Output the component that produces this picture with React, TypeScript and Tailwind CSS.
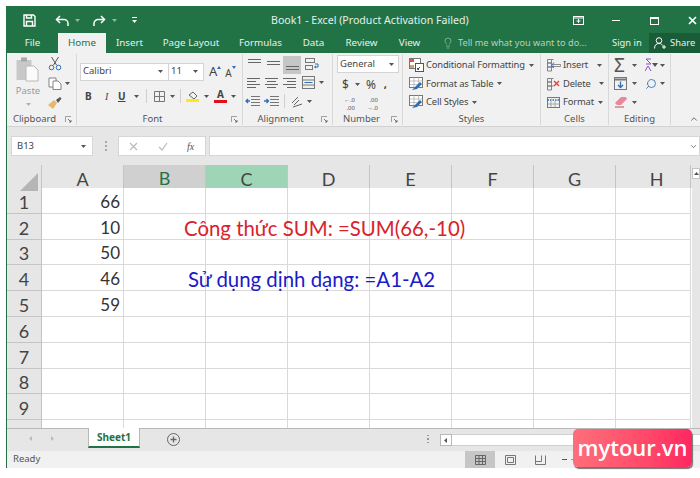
import React from "react";
import { Search, Lightbulb, ChevronUp, ChevronDown } from "lucide-react";

const ui = { fontFamily: '"Noto Sans", sans-serif' };
const cellFont = { fontFamily: 'Lato, "Noto Sans", sans-serif' };

const Caret = ({ className = "" }: { className?: string }) => (
	<svg width="5" height="3" viewBox="0 0 5 3" className={`shrink-0 ${className}`}>
		<path d="M0 0h5L2.5 3z" fill="#555" />
	</svg>
);

const Launcher = () => (
	<svg width="7" height="7" viewBox="0 0 7 7" className="absolute right-[4px] top-[3px]" fill="none" stroke="#8a8a8a" strokeWidth="0.8">
		<path d="M.5 6V.5H6" />
		<path d="M3 3l3 3M6 4v2H4" stroke="#555" />
	</svg>
);

const Lines = ({ rows, selected }: { rows: [number, number][]; selected?: boolean }) => (
	<div className={`w-[18px] h-[18px] flex flex-col justify-center items-center gap-[2px] ${selected ? "bg-[#c6c6c6]" : ""}`}>
		<svg width="13" height="12" viewBox="0 0 13 12" stroke="#666" strokeWidth="1">
			{rows.map(([x, w], i) => (
				<path key={i} d={`M${x} ${i * 3 + 1.5}h${w}`} />
			))}
		</svg>
	</div>
);

const Group = ({ label, width, launcher, labelPad = 0, children }: { label: string; width: number; launcher?: boolean; labelPad?: number; children: React.ReactNode }) => (
	<div className="flex flex-col shrink-0 border-r border-[#d8d8d8] mb-[1px]" style={{ width }}>
		<div className="h-[60px] relative flex">{children}</div>
		<div className="h-[12px] relative flex items-center justify-center text-[9.5px] text-[#555]" style={{ paddingRight: labelPad }}>
			{label}
			{launcher && <Launcher />}
		</div>
	</div>
);

const StyleIcon = () => (
	<svg width="15" height="14" viewBox="0 0 15 14" className="shrink-0">
		<rect x="0.5" y="0.5" width="13" height="10" fill="#fff" stroke="#777" />
		<path d="M.5 4h13M.5 7.5h13M5 .5v10M9.5 .5v10" stroke="#aaa" strokeWidth="0.7" />
		<path d="M3 13l5-5 3-3 2 2-5 5z" fill="#2f6fb5" />
	</svg>
);

const CondIcon = () => (
	<svg width="15" height="14" viewBox="0 0 15 14" className="shrink-0">
		<rect x="0.5" y="0.5" width="11" height="10" fill="#fff" stroke="#777" />
		<rect x="1" y="1" width="4" height="3" fill="#d9583f" />
		<rect x="1" y="7" width="4" height="3" fill="#e79a55" />
		<rect x="6.5" y="5.5" width="8" height="8" fill="#fff" stroke="#555" />
		<path d="M9 11l2-2M10 11.500h-1.500V10" stroke="#444" fill="none" />
	</svg>
);

const CellIcon = ({ mark }: { mark: "insert" | "delete" | "format" }) => (
	<svg width="15" height="14" viewBox="0 0 15 14" className="shrink-0" fill="none">
		{mark === "format" ? (
			<>
				<rect x="1.5" y="2.5" width="12" height="10" stroke="#777" />
				<path d="M1.5 5h12" stroke="#2f6fb5" strokeWidth="1.6" strokeDasharray="1.5 1" />
				<path d="M5 6v6M9 6v6M1.5 9h12" stroke="#999" strokeWidth="0.8" />
			</>
		) : (
			<>
				<path d="M1.5 1.5h4v3.5h-4zM1.5 5h4v4h-4zM1.5 9h4v4h-4zM5.5 1.5h2M5.5 9h2" stroke="#777" strokeWidth="0.9" />
				{mark === "insert" ? (
					<>
						<path d="M7 6.5h7.5v2H7z" stroke="#777" strokeWidth="0.8" />
						<path d="M8 4.5l-2.5 3L8 10" stroke="#2f6fb5" />
					</>
				) : (
					<path d="M8 4l5 5M13 4l-5 5" stroke="#d9473a" strokeWidth="1.4" />
				)}
			</>
		)}
	</svg>
);

const StyleRow = ({ text, icon }: { text: string; icon?: React.ReactNode }) => (
	<div className="h-[18.5px] flex items-center gap-[2px] text-[9.4px] tracking-[-0.15px] text-[#444] whitespace-nowrap">
		{icon ?? <StyleIcon />}
		<span>{text}</span>
		<Caret className="ml-[2px]" />
	</div>
);

const CellRow = ({ text, mark, caretClass }: { text: string; mark: "insert" | "delete" | "format"; caretClass: string }) => (
	<div className="h-[18.5px] flex items-center gap-[2px] text-[9.4px] tracking-[-0.15px] text-[#444] whitespace-nowrap">
		<CellIcon mark={mark} />
		<span>{text}</span>
		<Caret className={caretClass} />
	</div>
);

const TitleBar = () => (
	<div className="h-[27px] bg-[#217346] flex items-center text-white shrink-0">
		<div className="w-[264px] flex items-center pl-[16px] pt-[2px]">
			<svg width="13" height="13" viewBox="0 0 13 13" fill="none" stroke="#fff" strokeWidth="1.4">
				<path d="M1 1h9.5L12 2.5V12H1z" />
				<path d="M3.5 1v3h5V1M3.5 12V7.5h6V12" />
			</svg>
			<svg width="16" height="12" viewBox="0 0 16 12" fill="none" stroke="#fff" strokeWidth="1.5" className="ml-[19px]">
				<path d="M5 1L1.5 4.5 5 8" />
				<path d="M2 4.5h7a4 4 0 0 1 4 4V11" />
			</svg>
			<Caret className="ml-[4px] invert" />
			<svg width="15" height="12" viewBox="0 0 15 12" fill="none" stroke="#fff" strokeWidth="1.5" className="ml-[11px]">
				<path d="M10 1l3.5 3.5L10 8" />
				<path d="M13 4.5H7a4 4 0 0 0-4 4V11" />
			</svg>
			<Caret className="ml-[6px] invert" />
			<svg width="5" height="7" viewBox="0 0 5 7" className="ml-[15px]" fill="#fff">
				<path d="M0 0h5v1H0zM0 3h5L2.5 6z" />
			</svg>
		</div>
		<div className="text-[10.6px] whitespace-nowrap w-[292px] text-[#e6f0ea] pt-[3px]" style={ui}>
			Book1 - Excel (Product Activation Failed)
		</div>
		<div className="flex items-center pt-[2px]">
			<svg width="11" height="9" viewBox="0 0 11 9" fill="none" stroke="#fff" className="ml-[10px]">
				<rect x="0.5" y="0.5" width="10" height="8" />
				<path d="M.5 2h10" />
				<path d="M5.5 3v4M3.5 5h4" />
			</svg>
			<div className="w-[8px] h-[1.5px] bg-white ml-[28px]" />
			<div className="w-[9px] h-[8px] border border-white border-t-2 ml-[30px]" />
			<svg width="9" height="9" viewBox="0 0 9 9" stroke="#fff" strokeWidth="1.7" className="ml-[29px]">
				<path d="M1 1l7 7M8 1L1 8" />
			</svg>
		</div>
	</div>
);

const tabs: [string, number][] = [
	["Insert", 47],
	["Page Layout", 76],
	["Formulas", 63],
	["Data", 43],
	["Review", 53],
	["View", 43],
];

const TabBar = () => (
	<div className="h-[20px] bg-[#217346] flex items-stretch text-[9.8px] text-[#e8f1ec] shrink-0" style={ui}>
		<div className="w-[51px] flex items-center justify-center">File</div>
		<div className="w-[48px] bg-[#f1f1f1] text-[#217346] flex items-center justify-center">Home</div>
		{tabs.map(([t, w]) => (
			<div key={t} className="flex items-center justify-center shrink-0" style={{ width: w }}>
				{t}
			</div>
		))}
		<div className="flex items-center w-[181px] pl-[11px] gap-[4px] text-[9.2px] text-[#b6d0c1] whitespace-nowrap">
			<Lightbulb size={12} strokeWidth={1.2} />
			<span>Tell me what you want to do...</span>
		</div>
		<div className="w-[37px] flex items-center whitespace-nowrap text-[9.4px]">Sign in</div>
		<div className="flex-1 bg-[#1a5c38] flex items-center gap-[3px] pl-[5px] whitespace-nowrap text-[9.4px]">
			<svg width="13" height="12" viewBox="0 0 13 12" fill="none" stroke="#fff">
				<circle cx="5" cy="3.5" r="2.8" />
				<path d="M.5 11.500c0-3.500 2-5 4.500-5s3 1 3.500 2M10 8v4M8 10h4" />
			</svg>
			Share
		</div>
	</div>
);

const Ribbon = () => (
	<div className="h-[74px] bg-[#f1f1f1] border-b border-[#d2d2d2] flex shrink-0 relative pt-[1px]" style={ui}>
		<Group label="Clipboard" width={70} launcher labelPad={14}>
			<div className="w-[38px] flex flex-col items-center pl-[4px] pt-[3px]">
				<svg width="24" height="25" viewBox="0 0 24 25">
					<rect x="0.500" y="3" width="15" height="20" fill="#c9c9c9" />
					<rect x="5" y="0.500" width="6" height="4" fill="#a9a9a9" />
					<path d="M10 9h8l4 4v11H10z" fill="#fbfbfb" stroke="#b8b8b8" />
				</svg>
				<span className="text-[9.5px] text-[#9a9a9a] leading-[12px] mt-[3px]">Paste</span>
				<Caret className="mt-[6px] opacity-40" />
			</div>
			<div className="flex flex-col pl-[3px] pt-[2px] gap-[6px]">
				<svg width="14" height="15" viewBox="0 0 14 15" fill="none" stroke="#555">
					<path d="M3.500 1L8.500 9M10.500 1L5.500 9" />
					<circle cx="3.500" cy="11.500" r="2.300" stroke="#2f6fb5" />
					<circle cx="10.500" cy="11.500" r="2.300" stroke="#2f6fb5" />
				</svg>
				<div className="flex items-center gap-[3px]">
					<svg width="14" height="13" viewBox="0 0 14 13" fill="#fff" stroke="#777" strokeWidth="0.9">
						<path d="M1 1h7v9H1z" />
						<path d="M5 4h5l3 3v5.500H5z" />
					</svg>
					<Caret />
				</div>
				<svg width="14" height="13" viewBox="0 0 14 13">
					<path d="M0 9l6-5 3 3-4 6z" fill="#e8b76a" />
					<path d="M8 4l4-3 1.500 1.500L10 7z" fill="#555" />
				</svg>
			</div>
		</Group>

		<Group label="Font" width={166} launcher labelPad={14}>
			<div className="flex flex-col pl-[3px] pt-[8px]">
				<div className="flex items-center h-[19px]">
					<div className="w-[89px] h-[18px] bg-white border border-[#d4d4d4] flex items-center justify-between pl-[2px] pr-[5px] text-[9.5px] text-[#444]">
						Calibri <Caret />
					</div>
					<div className="w-[35px] h-[18px] bg-white border border-l-0 border-[#d4d4d4] flex items-center justify-between pl-[2px] pr-[5px] text-[9.5px] text-[#444]">
						11 <Caret />
					</div>
					<span className="ml-[5px] text-[13px] text-[#444] leading-none">A</span>
					<svg width="4" height="3" viewBox="0 0 4 3" className="mb-[9px]"><path d="M0 3l2-3 2 3z" fill="#2f6fb5" /></svg>
					<span className="ml-[4px] text-[10px] text-[#444] leading-none mt-[2px]">A</span>
					<svg width="4" height="3" viewBox="0 0 4 3" className="mb-[9px]"><path d="M0 0l2 3 2-3z" fill="#2f6fb5" /></svg>
				</div>
				<div className="flex items-center h-[18px] mt-[6px] text-[#444]">
					<span className="w-[10px] ml-[5px] font-bold text-[10px]">B</span>
					<span className="w-[10px] ml-[10px] italic text-[10px]" style={{ fontFamily: '"Liberation Serif", serif' }}>I</span>
					<span className="w-[9px] ml-[3px] font-bold underline text-[10px]">U</span>
					<Caret className="ml-[7px]" />
					<div className="w-px h-[14px] bg-[#cfcfcf] ml-[7px]" />
					<svg width="11" height="11" viewBox="0 0 11 11" fill="none" stroke="#777" className="ml-[7px]">
						<path d="M.5.500h10v10H.500zM.5 5.500h10M5.500.500v10" />
					</svg>
					<Caret className="ml-[5px]" />
					<div className="w-px h-[14px] bg-[#cfcfcf] ml-[5px]" />
					<div className="flex flex-col items-center ml-[5px]">
						<svg width="12" height="8" viewBox="0 0 12 8" fill="none" stroke="#666"><path d="M2 4l4-3 4 4-3 3z" /></svg>
						<div className="w-[13px] h-[3px] bg-[#ffe81a]" />
					</div>
					<Caret className="ml-[5px]" />
					<div className="flex flex-col items-center ml-[5px]">
						<span className="text-[10px] font-bold leading-[9px]">A</span>
						<div className="w-[13px] h-[3px] bg-[#e0101a] mt-[1px]" />
					</div>
					<Caret className="ml-[4px]" />
				</div>
			</div>
		</Group>

		<Group label="Alignment" width={90} launcher labelPad={14}>
			<div className="flex flex-col pl-[1px] pt-[1px]">
				<div className="flex items-center h-[18px]">
					<div className="w-[16px] ml-[1px]"><Lines rows={[[0, 13], [0, 13], [0, 0], [0, 0]]} /></div>
					<div className="w-[18px] ml-[3px] pt-[4px]"><Lines rows={[[0, 13], [0, 13], [0, 0], [0, 0]]} /></div>
					<div className="ml-[1px] pt-[1px]"><Lines rows={[[0, 0], [0, 0], [0, 13], [0, 13]]} selected /></div>
					<svg width="14" height="13" viewBox="0 0 14 13" fill="none" stroke="#777" className="ml-[4px]">
						<rect x="0.500" y="0.500" width="9" height="4" />
						<rect x="0.500" y="7.500" width="7" height="4" />
						<path d="M10 6h3v3H10M11 8L9.500 9l1.500 1" stroke="#2f6fb5" />
					</svg>
				</div>
				<div className="flex items-center h-[19px]">
					<Lines rows={[[0, 13], [0, 9], [0, 13], [0, 9]]} />
					<Lines rows={[[0, 13], [2, 9], [0, 13], [2, 9]]} />
					<Lines rows={[[0, 13], [4, 9], [0, 13], [4, 9]]} />
					<svg width="13" height="13" viewBox="0 0 13 13" fill="none" stroke="#777" className="ml-[4px]">
						<rect x="0.500" y="0.500" width="12" height="12" />
						<path d="M.5 4h12M.5 9h12" />
						<path d="M2.500 6.500h8" stroke="#2f6fb5" />
					</svg>
					<Caret className="ml-[4px]" />
				</div>
				<div className="flex items-center h-[18px] pl-[1px]">
					<svg width="15" height="12" viewBox="0 0 15 12" fill="none" stroke="#777">
						<path d="M6 1.500h9M6 4.500h9M6 7.500h9M6 10.500h9" />
						<path d="M5 6H1M3 4L1 6l2 2" stroke="#2f6fb5" strokeWidth="1.300" />
					</svg>
					<svg width="15" height="12" viewBox="0 0 15 12" fill="none" stroke="#777" className="ml-[4px]">
						<path d="M6 1.500h9M6 4.500h9M6 7.500h9M6 10.500h9" />
						<path d="M0 6h4M2.500 4l2 2-2 2" stroke="#2f6fb5" strokeWidth="1.300" />
					</svg>
					<div className="w-px h-[14px] bg-[#cfcfcf] ml-[5px]" />
					<svg width="13" height="13" viewBox="0 0 13 13" fill="none" stroke="#666" className="ml-[6px]">
						<path d="M1 8l6-6M3 10l5-5M2 12l9-3" />
					</svg>
					<Caret className="ml-[3px]" />
				</div>
			</div>
		</Group>

		<Group label="Number" width={70} launcher labelPad={12}>
			<div className="flex flex-col pl-[4px] pt-[1px]">
				<div className="w-[62px] h-[18px] bg-white border border-[#d4d4d4] flex items-center justify-between pl-[2px] pr-[4px] text-[9.5px] text-[#444]">
					General <Caret />
				</div>
				<div className="flex items-center h-[19px] mt-[2px] text-[#444]">
					<span className="ml-[5px] text-[12px]">$</span>
					<Caret className="ml-[6px]" />
					<span className="ml-[6px] text-[12px]">%</span>
					<span className="ml-[8px] text-[11px] font-bold leading-none mb-[3px]">,</span>
				</div>
				<div className="flex items-center h-[18px] mt-[1px] text-[6px] leading-[8px] text-[#555]">
					<span className="ml-[4px] w-[14px] text-right">←.0<br />.00</span>
					<span className="ml-[9px] w-[14px] text-right">.00<br />→.0</span>
				</div>
			</div>
		</Group>

		<Group label="Styles" width={138}>
			<div className="flex flex-col pl-[6px] pt-[2px]">
				<StyleRow text="Conditional Formatting" icon={<CondIcon />} />
				<StyleRow text="Format as Table" />
				<StyleRow text="Cell Styles" />
			</div>
		</Group>

		<Group label="Cells" width={68}>
			<div className="flex flex-col pl-[5px] pt-[2px]">
				<CellRow text="Insert" mark="insert" caretClass="ml-[7px]" />
				<CellRow text="Delete" mark="delete" caretClass="ml-[6px]" />
				<CellRow text="Format" mark="format" caretClass="ml-[2px]" />
			</div>
		</Group>

		<Group label="Editing" width={62}>
			<div className="flex flex-col pl-[5px] pt-[2px]">
				<div className="flex items-center h-[18.500px]">
					<span className="text-[19px] leading-none text-[#555] w-[14px]">Σ</span>
					<Caret className="ml-[4px]" />
					<svg width="13" height="14" viewBox="0 0 13 14" className="ml-[8px]">
						<path d="M0 13l3-5 3 5M1 6h5L1 1h5" fill="none" stroke="#7e57c2" />
						<path d="M7 5h6l-3 4z" fill="#555" />
					</svg>
					<Caret className="ml-[2px]" />
				</div>
				<div className="flex items-center h-[18.500px]">
					<svg width="13" height="13" viewBox="0 0 13 13" fill="none" stroke="#777">
						<rect x="0.500" y="0.500" width="12" height="12" />
						<path d="M.5 2.500h12" strokeWidth="2" />
						<path d="M6.500 4.500v6M4 8l2.500 2.500L9 8" stroke="#2f6fb5" strokeWidth="1.300" />
					</svg>
					<Caret className="ml-[5px]" />
					<Search size={12} strokeWidth={1.7} color="#2f6fb5" className="ml-[8px] -scale-x-100" />
					<Caret className="ml-[3px]" />
				</div>
				<div className="flex items-center h-[18.500px]">
					<svg width="14" height="12" viewBox="0 0 14 12">
						<path d="M1 7l6-6h5l1 2-6 6H3z" fill="#e8899a" />
						<path d="M1 11h9" stroke="#c9455e" />
					</svg>
					<Caret className="ml-[4px]" />
				</div>
			</div>
		</Group>

		<div className="flex-1 flex items-end justify-end pr-[1px] pb-[2px]">
			<ChevronUp size={10} color="#555" />
		</div>
	</div>
);

const FormulaBar = () => (
	<div className="h-[38px] bg-[#e6e6e6] flex shrink-0 pt-[9px] pl-[4px] relative" style={ui}>
		<div className="w-[82px] h-[20px] bg-white border border-[#d6d6d6] flex items-center justify-between pl-[5px] pr-[6px] text-[9.5px] text-[#444]">
			B13 <Caret />
		</div>
		<div className="w-[25px] flex flex-col items-center justify-center gap-[2px] h-[20px]">
			<div className="w-[2px] h-[2px] bg-[#aaa]" />
			<div className="w-[2px] h-[2px] bg-[#aaa]" />
			<div className="w-[2px] h-[2px] bg-[#aaa]" />
		</div>
		<div className="w-[88px] h-[20px] bg-white border border-[#d6d6d6] flex items-center pl-[10px]">
			<svg width="9" height="9" viewBox="0 0 9 9" stroke="#bbb" strokeWidth="1.200"><path d="M1 1l7 7M8 1L1 8" /></svg>
			<svg width="10" height="9" viewBox="0 0 10 9" stroke="#bbb" strokeWidth="1.200" fill="none" className="ml-[20px]"><path d="M1 5l3 3 5-7" /></svg>
			<span className="ml-[19px] italic text-[10px] text-[#555]" style={{ fontFamily: '"Liberation Serif", serif' }}>fx</span>
		</div>
		<div className="flex-1 ml-[3px] h-[20px] bg-white border border-[#d6d6d6] flex items-center justify-end pr-[1px]">
			<ChevronDown size={9} color="#555" />
		</div>
	</div>
);

const cols = ["A", "B", "C", "D", "E", "F", "G", "H"];
const values = [66, 10, 50, 46, 59];

const Sheet = () => (
	<div className="flex h-[263px] shrink-0 bg-[#e6e6e6]" style={cellFont}>
		<div className="w-[685px] shrink-0 flex flex-col">
			<div className="h-[23px] grid grid-cols-[35px_repeat(7,82px)_75px] shrink-0">
				<div className="flex justify-end items-end pr-[3px] pb-[2px] border-r border-[#c4c4c4] border-b">
					<div className="w-[18px] h-[18px] bg-[#b5b5b5] [clip-path:polygon(100%_0,100%_100%,0_100%)]" />
				</div>
				{cols.map((c) => (
					<div
						key={c}
						className={`flex items-center justify-center text-[18px] text-[#444] border-r border-b border-[#c4c4c4] ${
							c === "B"
								? "bg-[#d0d0d0] text-[#217346] border-b-2 border-b-[#217346]"
								: c === "C"
									? "bg-[#9fd5b7]"
									: c === "H"
										? "pl-[7px]"
										: ""
						}`}
					>
						{c}
					</div>
				))}
			</div>
			<div className="h-[240px] overflow-hidden bg-white">
				{Array.from({ length: 10 }, (_, r) => (
					<div key={r} className="h-[25.800px] grid grid-cols-[35px_repeat(7,82px)_75px]">
						<div className="bg-[#e6e6e6] border-r border-b border-[#c4c4c4] flex items-center justify-center pt-[3px] text-[18px] leading-[20px] text-[#444]">
							{r < 9 ? r + 1 : ""}
						</div>
						{cols.map((c) => (
							<div key={c} className="border-r border-b border-[#d9d9d9] flex items-center pt-[3px] relative">
								{c === "A" && values[r] !== undefined && (
									<span className="w-full text-right pr-[3px] text-[17px] leading-[20px] text-[#333]">{values[r]}</span>
								)}
								{c === "B" && r === 1 && (
									<span className="ml-[60px] text-[20.400px] leading-[22px] text-[#d8232a] whitespace-nowrap relative z-10">
										Công thức SUM: =SUM(66,-10)
									</span>
								)}
								{c === "B" && r === 3 && (
									<span className="ml-[64px] text-[20.400px] leading-[22px] text-[#1a1ac8] whitespace-nowrap relative z-10">
										Sử dụng dịnh dạng: =A1-A2
									</span>
								)}
							</div>
						))}
					</div>
				))}
			</div>
		</div>
		<div className="flex-1 pt-[3px] flex flex-col items-end">
			<div className="w-[8px] h-[11px] bg-white border border-[#c4c4c4] flex items-center justify-center">
				<svg width="5" height="3" viewBox="0 0 5 3"><path d="M0 3l2.500-3L5 3z" fill="#555" /></svg>
			</div>
		</div>
	</div>
);

const SheetTabs = () => (
	<div className="h-[23px] bg-[#e6e6e6] border-t border-[#b8b8b8] flex shrink-0 items-start" style={ui}>
		<div className="w-[81px] h-[18px] flex items-center pl-[22px] gap-[19px]">
			<svg width="3" height="5" viewBox="0 0 3 5"><path d="M3 0v5L0 2.500z" fill="#bbb" /></svg>
			<svg width="3" height="5" viewBox="0 0 3 5"><path d="M0 0v5l3-2.500z" fill="#bbb" /></svg>
		</div>
		<div className="w-[52px] h-[20px] -mt-px bg-white border-x border-[#b8b8b8] border-b-2 border-b-[#217346] flex items-center justify-center text-[10px] font-bold text-[#217346]">
			Sheet1
		</div>
		<svg width="13" height="13" viewBox="0 0 13 13" fill="none" stroke="#666" className="ml-[27px] mt-[4px]">
			<circle cx="6.500" cy="6.500" r="6" />
			<path d="M6.500 3.500v6M3.500 6.500h6" strokeWidth="1.300" />
		</svg>
		<div className="ml-[247px] mt-[3px] flex flex-col gap-[2px] h-[14px] justify-center">
			<div className="w-[1.500px] h-[1.500px] bg-[#999]" />
			<div className="w-[1.500px] h-[1.500px] bg-[#999]" />
			<div className="w-[1.500px] h-[1.500px] bg-[#999]" />
		</div>
		<div className="ml-[11px] mt-[5px] h-[12px] w-[12px] bg-white border border-[#b8b8b8] flex items-center justify-center shrink-0">
			<svg width="3" height="5" viewBox="0 0 3 5"><path d="M3 0v5L0 2.500z" fill="#555" /></svg>
		</div>
		<div className="mt-[5px] h-[12px] flex-1 bg-white border-y border-[#d0d0d0]" />
	</div>
);

const StatusBar = () => (
	<div className="h-[17px] bg-[#f1f1f1] flex items-stretch shrink-0 text-[9.500px] text-[#555]" style={ui}>
		<div className="w-[458px] pl-[6px] flex items-center">Ready</div>
		<div className="w-[30px] bg-[#c6c6c6] flex items-center justify-center">
			<svg width="11" height="10" viewBox="0 0 11 10" fill="none" stroke="#666">
				<path d="M.5.500h10v9H.500zM.5 3.500h10M.5 6.500h10M4 .500v9M7.500 .500v9" />
			</svg>
		</div>
		<div className="w-[30px] flex items-center justify-center">
			<svg width="11" height="10" viewBox="0 0 11 10" fill="none" stroke="#777">
				<path d="M.5.500h10v9H.500zM2.500 2.500h6v5h-6z" />
			</svg>
		</div>
		<div className="w-[30px] flex items-center justify-center">
			<svg width="11" height="10" viewBox="0 0 11 10" fill="none" stroke="#777">
				<path d="M.5.500v9h10v-9M.5 6.500h6V.500" />
			</svg>
		</div>
		<div className="flex items-center ml-[7px]">
			<div className="w-[5px] h-[1.500px] bg-[#555]" />
			<div className="w-[30px] h-px bg-[#999] ml-[4px]" />
		</div>
	</div>
);

export default function App() {
	return (
		<div className="w-[700px] h-[478px] bg-white pt-[6px] pl-[6px] relative overflow-hidden">
			<div className="h-[462px] flex flex-col border-l border-[#217346]">
				<TitleBar />
				<TabBar />
				<Ribbon />
				<FormulaBar />
				<Sheet />
				<SheetTabs />
				<StatusBar />
			</div>
			{/* watermark */}
			<div className="absolute left-[573px] top-[429px] w-[119px] h-[38px] rounded-[5px] bg-gradient-to-r from-[#ff6d7a] to-[#ff2560] shadow-[1px_2px_1px_rgba(60,60,60,0.7)] flex items-center justify-center text-white text-[22px] font-semibold pb-[2px]" style={{ fontFamily: '"Open Sans", sans-serif' }}>
				mytour.vn
			</div>
		</div>
	);
}
